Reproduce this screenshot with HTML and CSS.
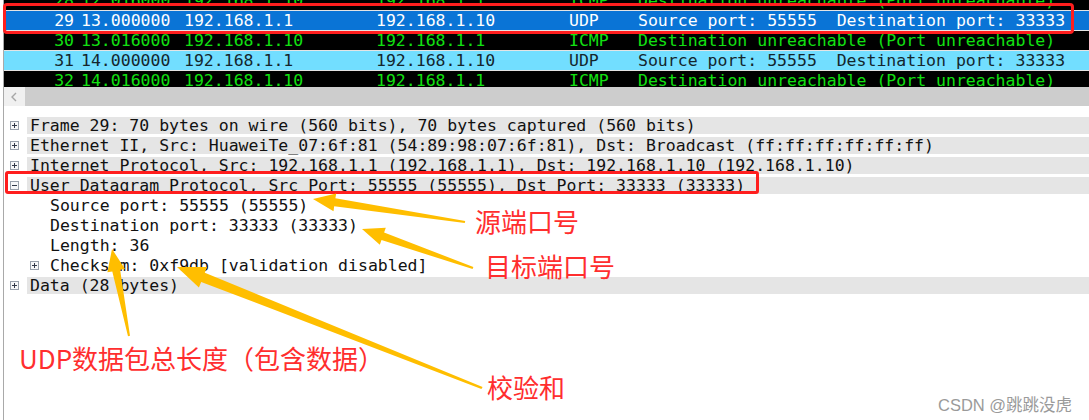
FILE: index.html
```html
<!DOCTYPE html>
<html lang="zh-CN">
<head>
<meta charset="utf-8">
<title>Wireshark UDP</title>
<link rel="stylesheet" href="styles.css">
</head>
<body>
<div class="screen">
  <div class="app">
    <div class="plist">
      <div class="rows">
        <div class="prow err"><span class="c-no">28</span><span class="c-time">12.016000</span><span class="c-src">192.168.1.10</span><span class="c-dst">192.168.1.1</span><span class="c-proto">ICMP</span><span class="c-info">Destination unreachable (Port unreachable)</span></div>
        <div class="prow sel"><span class="c-no">29</span><span class="c-time">13.000000</span><span class="c-src">192.168.1.1</span><span class="c-dst">192.168.1.10</span><span class="c-proto">UDP</span><span class="c-info">Source port: 55555  Destination port: 33333</span></div>
        <div class="prow err"><span class="c-no">30</span><span class="c-time">13.016000</span><span class="c-src">192.168.1.10</span><span class="c-dst">192.168.1.1</span><span class="c-proto">ICMP</span><span class="c-info">Destination unreachable (Port unreachable)</span></div>
        <div class="prow udp"><span class="c-no">31</span><span class="c-time">14.000000</span><span class="c-src">192.168.1.1</span><span class="c-dst">192.168.1.10</span><span class="c-proto">UDP</span><span class="c-info">Source port: 55555  Destination port: 33333</span></div>
        <div class="prow err"><span class="c-no">32</span><span class="c-time">14.016000</span><span class="c-src">192.168.1.10</span><span class="c-dst">192.168.1.1</span><span class="c-proto">ICMP</span><span class="c-info">Destination unreachable (Port unreachable)</span></div>
      </div>
    </div>
    <div class="hscroll">
      <div class="hs-btn"><svg width="8" height="10" viewBox="0 0 8 10"><path d="M6 1 L2 5 L6 9" fill="none" stroke="#a6a6a6" stroke-width="1.4"/></svg></div>
      <div class="hs-thumb"></div>
    </div>
    <div class="tree">
      <div class="trow"><span class="twist"><svg class="box" width="9" height="9" viewBox="0 0 9 9"><rect x="0.5" y="0.5" width="8" height="8" fill="#f6f7f9" stroke="#98a0ab"/><path d="M2 4.5H7M4.5 2V7" stroke="#303848" stroke-width="1"/></svg></span><span class="label top">Frame 29: 70 bytes on wire (560 bits), 70 bytes captured (560 bits)</span></div>
      <div class="trow"><span class="twist"><svg class="box" width="9" height="9" viewBox="0 0 9 9"><rect x="0.5" y="0.5" width="8" height="8" fill="#f6f7f9" stroke="#98a0ab"/><path d="M2 4.5H7M4.5 2V7" stroke="#303848" stroke-width="1"/></svg></span><span class="label top">Ethernet II, Src: HuaweiTe_07:6f:81 (54:89:98:07:6f:81), Dst: Broadcast (ff:ff:ff:ff:ff:ff)</span></div>
      <div class="trow"><span class="twist"><svg class="box" width="9" height="9" viewBox="0 0 9 9"><rect x="0.5" y="0.5" width="8" height="8" fill="#f6f7f9" stroke="#98a0ab"/><path d="M2 4.5H7M4.5 2V7" stroke="#303848" stroke-width="1"/></svg></span><span class="label top">Internet Protocol, Src: 192.168.1.1 (192.168.1.1), Dst: 192.168.1.10 (192.168.1.10)</span></div>
      <div class="trow"><span class="twist"><svg class="box" width="9" height="9" viewBox="0 0 9 9"><rect x="0.5" y="0.5" width="8" height="8" fill="#f6f7f9" stroke="#98a0ab"/><path d="M2 4.5H7" stroke="#303848" stroke-width="1"/></svg></span><span class="label top">User Datagram Protocol, Src Port: 55555 (55555), Dst Port: 33333 (33333)</span></div>
      <div class="trow child"><span class="twist"></span><span class="label">Source port: 55555 (55555)</span></div>
      <div class="trow child"><span class="twist"></span><span class="label">Destination port: 33333 (33333)</span></div>
      <div class="trow child"><span class="twist"></span><span class="label">Length: 36</span></div>
      <div class="trow child"><span class="twist"><svg class="box" width="9" height="9" viewBox="0 0 9 9"><rect x="0.5" y="0.5" width="8" height="8" fill="#f6f7f9" stroke="#98a0ab"/><path d="M2 4.5H7M4.5 2V7" stroke="#303848" stroke-width="1"/></svg></span><span class="label">Checksum: 0xf9db [validation disabled]</span></div>
      <div class="trow"><span class="twist"><svg class="box" width="9" height="9" viewBox="0 0 9 9"><rect x="0.5" y="0.5" width="8" height="8" fill="#f6f7f9" stroke="#98a0ab"/><path d="M2 4.5H7M4.5 2V7" stroke="#303848" stroke-width="1"/></svg></span><span class="label top">Data (28 bytes)</span></div>
    </div>
  </div>

  <div class="redbox rb-packet"></div>
  <div class="redbox rb-udp"></div>

  <svg class="arrows" width="1089" height="420" viewBox="0 0 1089 420">
    <polygon points="465.2,221 335.4,198.3 336.2,193.4 313,199 333.5,211.2 334.2,206.3 464.8,223"/>
    <polygon points="473.4,267 384.1,232.5 385.8,227.8 362,229 379.8,244.8 381.5,240.1 472.6,269"/>
    <polygon points="130,335.8 120.1,269.8 125,268.9 112,249 107.4,272.3 112.3,271.4 128,336.2"/>
    <polygon points="482.6,387 204.8,272.7 207.1,267.1 177,267 198.9,287.5 201.2,281.9 481.4,389"/>
  </svg>

  <div class="note n-src">源端口号</div>
  <div class="note n-dst">目标端口号</div>
  <div class="note n-len">UDP数据包总长度（包含数据）</div>
  <div class="note n-sum">校验和</div>
  <div class="watermark">CSDN @跳跳没虎</div>
</div>
</body>
</html>
```

FILE: styles.css
```css
html, body {
  margin: 0;
  padding: 0;
  background: #ffffff;
}

body {
  width: 1089px;
  height: 420px;
  overflow: hidden;
}

.screen {
  position: relative;
  width: 1089px;
  height: 420px;
  overflow: hidden;
  font-family: "DejaVu Sans Mono", "Liberation Mono", monospace;
  font-size: 16.5px;
}

.app {
  margin-left: 3px;
  border-left: 1px solid #a9a9a9;
  height: 420px;
  display: flex;
  flex-direction: column;
}

/* packet list */
.plist {
  height: 87px;
  overflow: hidden;
}

.rows {
  margin-top: -10px;
}

.prow {
  display: flex;
  height: 20px;
  box-sizing: border-box;
  border-top: 1px solid #e4e4e4;
  line-height: 19px;
  white-space: pre;
}

.prow.err {
  background: #000000;
  color: #12e012;
}

.prow.sel {
  background: #0a74d6;
  color: #ffffff;
}

.prow.udp {
  background: #72deff;
  color: #14262d;
}

.c-no {
  width: 70px;
  text-align: right;
  flex: none;
}

.c-time {
  width: 110px;
  padding-left: 7px;
  box-sizing: border-box;
  flex: none;
}

.c-src {
  width: 192px;
  flex: none;
}

.c-dst {
  width: 193px;
  flex: none;
}

.c-proto {
  width: 69px;
  flex: none;
}

.c-info {
  flex: 1;
}

/* horizontal scrollbar */
.hscroll {
  height: 19px;
  display: flex;
  background: #f0f0f0;
}

.hs-btn {
  width: 21px;
  display: flex;
  align-items: center;
  justify-content: center;
  padding-right: 2px;
  box-sizing: border-box;
}

.hs-thumb {
  flex: 1;
  background: #cdcdcd;
}

/* detail tree */
.tree {
  padding-top: 9px;
  color: #111111;
}

.trow {
  display: flex;
  align-items: center;
  height: 20px;
  white-space: pre;
}

.twist {
  width: 23px;
  flex: none;
  box-sizing: border-box;
  padding-left: 6px;
  display: flex;
  align-items: center;
}

.trow.child {
  padding-left: 20px;
}

.label {
  flex: 1;
  height: 17px;
  line-height: 17px;
  padding-left: 3px;
}

.label.top {
  background: #e5e5e5;
}

/* annotations */
.redbox {
  position: absolute;
  border: 3px solid #ff1e1e;
  border-radius: 4px;
  box-sizing: border-box;
}

.rb-packet {
  left: 3px;
  top: 3px;
  width: 1071px;
  height: 31px;
}

.rb-udp {
  left: 5px;
  top: 171px;
  width: 754px;
  height: 23px;
  border-radius: 3px;
}

.arrows {
  position: absolute;
  left: 0;
  top: 0;
}

.arrows polygon {
  fill: #ffbe00;
}

.note {
  position: absolute;
  font-family: "Noto Sans CJK SC", "Noto Sans", sans-serif;
  font-size: 26px;
  line-height: 26px;
  color: #ff2e2e;
  white-space: nowrap;
}

.n-src {
  left: 475px;
  top: 208px;
}

.n-dst {
  left: 485px;
  top: 253px;
}

.n-len {
  left: 19px;
  top: 345px;
}

.n-sum {
  left: 487px;
  top: 374px;
}

.watermark {
  position: absolute;
  left: 938px;
  top: 396px;
  font-family: "Liberation Sans", "Noto Sans CJK SC", sans-serif;
  font-size: 16.5px;
  line-height: 18px;
  color: #9a9a9a;
  white-space: nowrap;
}
```
